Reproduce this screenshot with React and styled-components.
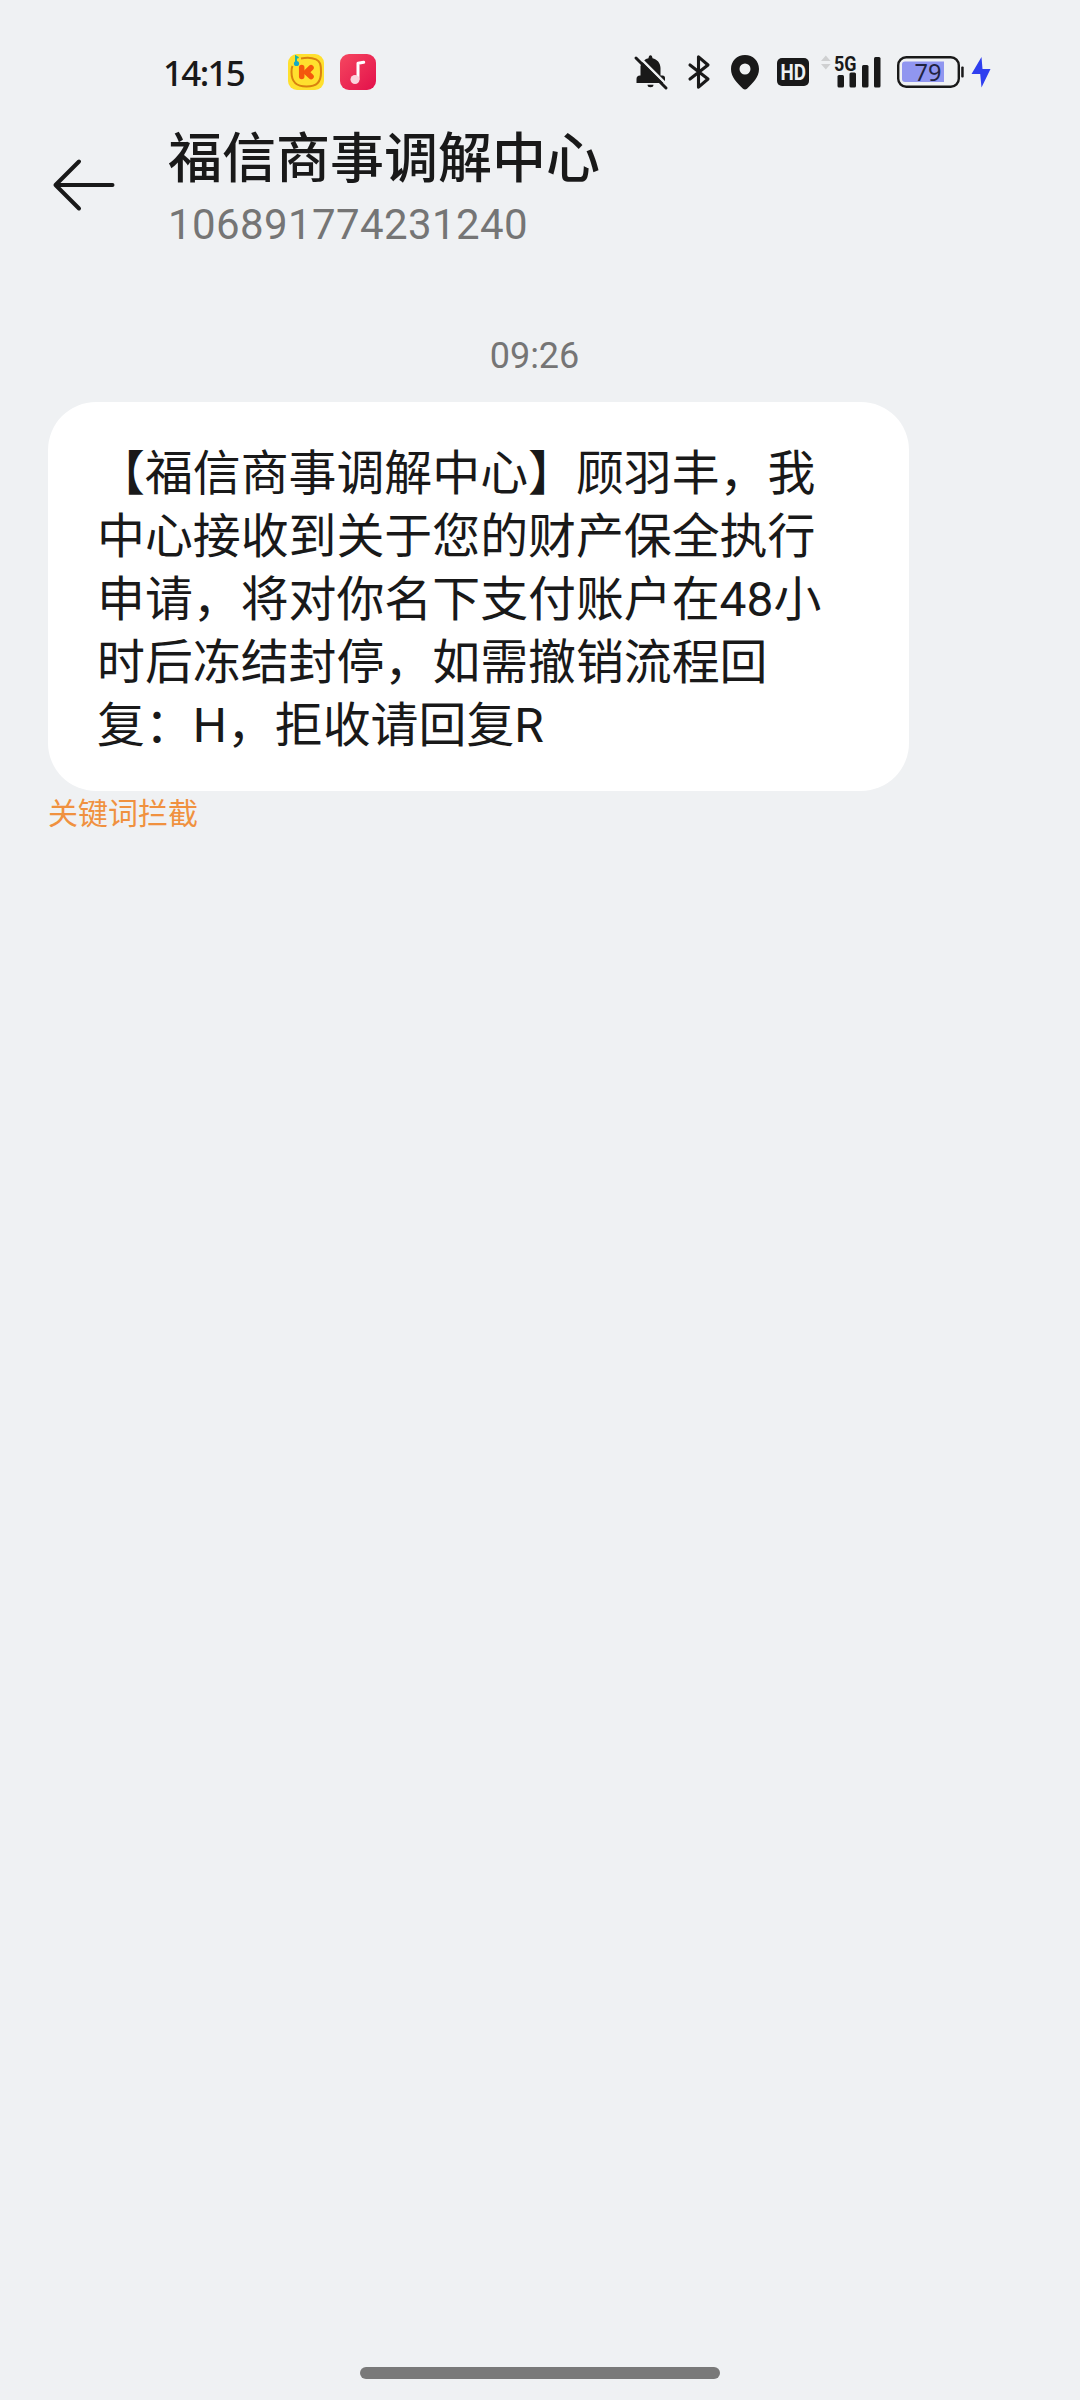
import styled, { createGlobalStyle } from "styled-components"

const GlobalStyle = createGlobalStyle`
  * {
    box-sizing: border-box;
  }
  body {
    margin: 0;
    background: #eff1f3;
  }
`

const Screen = styled.div`
  display: flex;
  flex-direction: column;
  width: 1080px;
  height: 2400px;
  background: #eff1f3;
  color: #191919;
  font-family: Roboto, "Noto Sans CJK SC", sans-serif;
`

const StatusBar = styled.div`
  display: flex;
  align-items: center;
  justify-content: space-between;
  height: 110px;
  padding: 36px 89px 2px 163px;
`

const StatusGroup = styled.div`
  display: flex;
  align-items: center;
`

const Clock = styled.span`
  width: 125px;
  padding-top: 1px;
  font-family: "Noto Sans", sans-serif;
  font-size: 35px;
  font-weight: 500;
  letter-spacing: -1.7px;
  line-height: 36px;
`

const Icon = styled.svg`
  display: block;
  flex: none;
  margin-left: ${({ $gap = 0 }) => $gap}px;
  overflow: visible;
`

const Header = styled.header`
  display: flex;
  align-items: center;
  height: 150px;
  padding: 0 52px;
`

const BackButton = styled.button`
  display: flex;
  width: 64px;
  padding: 0;
  margin-right: 52px;
  border: 0;
  background: none;
`

const Title = styled.h1`
  margin: 0;
  font-family: "Noto Sans CJK SC", sans-serif;
  font-size: 54px;
  font-weight: 500;
  line-height: 70px;
`

const Sender = styled.p`
  margin: 5px 0 -5px;
  color: #757575;
  font-size: 42px;
  letter-spacing: 0.4px;
  line-height: 60px;
`

const Conversation = styled.main`
  display: flex;
  flex: 1;
  flex-direction: column;
  align-items: flex-start;
  padding: 73px 48px 0;
`

const SentAt = styled.time`
  align-self: center;
  height: 69px;
  padding-right: 11px;
  color: #757575;
  font-size: 36px;
  line-height: 46px;
`

const Bubble = styled.div`
  width: 861px;
  height: 389px;
  padding: 41px 49px 33px;
  border-radius: 48px;
  background: #fff;
  font-size: 47.9px;
  line-height: 63px;
  white-space: nowrap;
`

const BlockedNote = styled.p`
  margin: 1px 0 0;
  color: #f0913f;
  font-size: 30px;
  line-height: 44px;
`

const HomeBar = styled.div`
  align-self: center;
  width: 360px;
  height: 12px;
  margin-bottom: 21px;
  border-radius: 6px;
  background: #797979;
`

const message = [
  "【福信商事调解中心】顾羽丰，我",
  "中心接收到关于您的财产保全执行",
  "申请，将对你名下支付账户在48小",
  "时后冻结封停，如需撤销流程回",
  "复：H，拒收请回复R",
]

const KaraokeIcon = () => (
  <Icon width="36" height="36" viewBox="0 0 36 36">
    <rect width="36" height="36" rx="9" fill="#ffe02e" />
    <path d="M13 4.500c4-.9 11-.9 15 .8 4 1.800 5 5 5 12.700 0 10-4 14.500-14.500 14.500S3.500 28 3.500 18c0-2.500.2-4.500 1-6" fill="none" stroke="#d9820f" strokeWidth="2" />
    <path d="M13.700 13.500v9" fill="none" stroke="#f4570d" strokeWidth="5.500" strokeLinecap="round" />
    <path d="M23 13.700l-4.600 4.600 4.600 4.200" fill="none" stroke="#f4570d" strokeWidth="5.600" strokeLinecap="round" strokeLinejoin="round" />
    <path d="M8 9V2.500l2.500 1.500" fill="none" stroke="#19b3a6" strokeWidth="2" />
    <circle cx="8.500" cy="9.500" r="2.600" fill="#18a9c4" />
  </Icon>
)

const MusicIcon = () => (
  <Icon $gap={16} width="36" height="36" viewBox="0 0 36 36">
    <defs>
      <linearGradient id="music" x1="0" y1="0" x2="1" y2="1">
        <stop offset="0" stopColor="#f5475f" />
        <stop offset="1" stopColor="#e3104b" />
      </linearGradient>
    </defs>
    <rect width="36" height="36" rx="9" fill="url(#music)" />
    <path d="M18 25V9.300l5.700-1.100" fill="none" stroke="#fff" strokeWidth="3" strokeLinejoin="round" strokeLinecap="round" />
    <circle cx="15" cy="25.500" r="4.500" fill="#fbd3dc" />
  </Icon>
)

const MutedIcon = () => (
  <Icon width="34" height="34" viewBox="0 0 34 34" fill="#191919">
    <path d="M6.500 11c1.500-4.500 4.500-7 8-7.700C14.700 1.500 15.400.3 16.500.3s1.800 1.200 2 3c4.500 1 8 4.700 8 9.700v7.500h2a2.500 2.500 0 0 1 2.500 2.500v5H2.500v-4a3.500 3.500 0 0 1 3.500-3.500h.5z" />
    <path d="M13.500 29.700h6a3 2.500 0 0 1-6 0z" />
    <path d="M4 .8l31 31" stroke="#eff1f3" strokeWidth="2.500" />
    <path d="M2 3l30 30" stroke="#191919" strokeWidth="3" strokeLinecap="round" />
  </Icon>
)

const BluetoothIcon = () => (
  <Icon $gap={20} width="22" height="34" viewBox="0 0 22 34">
    <path d="M2 10l18 14-9.500 8.200V1.800L20 10 2 24" fill="none" stroke="#191919" strokeWidth="3.100" strokeLinecap="round" strokeLinejoin="round" />
  </Icon>
)

const LocationIcon = () => (
  <Icon $gap={21} width="28" height="35" viewBox="0 0 28 35">
    <path d="M14 0C6 0 0 6 0 14c0 8 6 14 12 19.700 1.200 1.100 2.800 1.100 4 0C22 28 28 22 28 14 28 6 22 0 14 0zm0 8.500a5.500 5.500 0 1 1 0 11 5.500 5.500 0 0 1 0-11z" fill="#191919" />
  </Icon>
)

const HdIcon = () => (
  <Icon $gap={18} width="32" height="28" viewBox="0 0 32 28">
    <rect width="32" height="28" rx="5" fill="#191919" />
    <text x="3.500" y="22" fontFamily="Roboto, sans-serif" fontSize="22" fontWeight="700" textLength="25.500" lengthAdjust="spacingAndGlyphs" fill="#eff1f3">HD</text>
  </Icon>
)

const SignalIcon = () => (
  <Icon $gap={12} width="60" height="34" viewBox="0 0 60 34">
    <path d="M0 6l4.800-5.500L9.600 6zM0 9h9.600l-4.800 5.500z" fill="#cfd0d1" />
    <g fill="#191919">
      <text x="13" y="15.500" fontFamily="Roboto, sans-serif" fontSize="20.500" fontWeight="700" textLength="22.500" lengthAdjust="spacingAndGlyphs">5G</text>
      <rect x="16.500" y="20" width="6.500" height="12.500" rx="1.500" />
      <rect x="28.500" y="17.500" width="6.500" height="15" rx="1.500" />
      <rect x="41" y="10" width="6.500" height="22.500" rx="1.500" />
      <rect x="53" y="2" width="6.500" height="30.500" rx="1.500" />
    </g>
  </Icon>
)

const BatteryIcon = () => (
  <Icon $gap={16} width="67" height="32" viewBox="0 0 67 32">
    <path d="M8 5.500h39v20.500H8a3 3 0 0 1-3-3v-14.500a3 3 0 0 1 3-3z" fill="#9096f0" />
    <rect x="1.200" y="1.200" width="60.600" height="29.600" rx="8" fill="none" stroke="#191919" strokeWidth="2.400" />
    <rect x="64.200" y="10.500" width="2.500" height="11" rx="1" fill="#191919" />
    <text x="17.500" y="24.500" fontFamily="'Noto Sans', sans-serif" fontSize="23.500" fill="#20233f">79</text>
  </Icon>
)

const BoltIcon = () => (
  <Icon $gap={7} width="20" height="32" viewBox="0 0 20 32">
    <path d="M10.500 1L.5 18h8.700L10.500 31.500 19.500 13h-8z" fill="#2f3fef" />
  </Icon>
)

const ArrowIcon = () => (
  <Icon width="64" height="52" viewBox="0 0 64 52">
    <path d="M27 2.500L3.500 26 27 49.500M3.500 26h57" fill="none" stroke="#191919" strokeWidth="4" strokeLinecap="round" strokeLinejoin="round" />
  </Icon>
)

export default function App() {
  return (
    <Screen>
      <GlobalStyle />
      <StatusBar>
        <StatusGroup>
          <Clock>14:15</Clock>
          <KaraokeIcon />
          <MusicIcon />
        </StatusGroup>
        <StatusGroup>
          <MutedIcon />
          <BluetoothIcon />
          <LocationIcon />
          <HdIcon />
          <SignalIcon />
          <BatteryIcon />
          <BoltIcon />
        </StatusGroup>
      </StatusBar>
      <Header>
        <BackButton aria-label="返回">
          <ArrowIcon />
        </BackButton>
        <div>
          <Title>福信商事调解中心</Title>
          <Sender>106891774231240</Sender>
        </div>
      </Header>
      <Conversation>
        <SentAt>09:26</SentAt>
        <Bubble>
          {message.map(line => (
            <div key={line}>{line}</div>
          ))}
        </Bubble>
        <BlockedNote>关键词拦截</BlockedNote>
      </Conversation>
      <HomeBar />
    </Screen>
  )
}
